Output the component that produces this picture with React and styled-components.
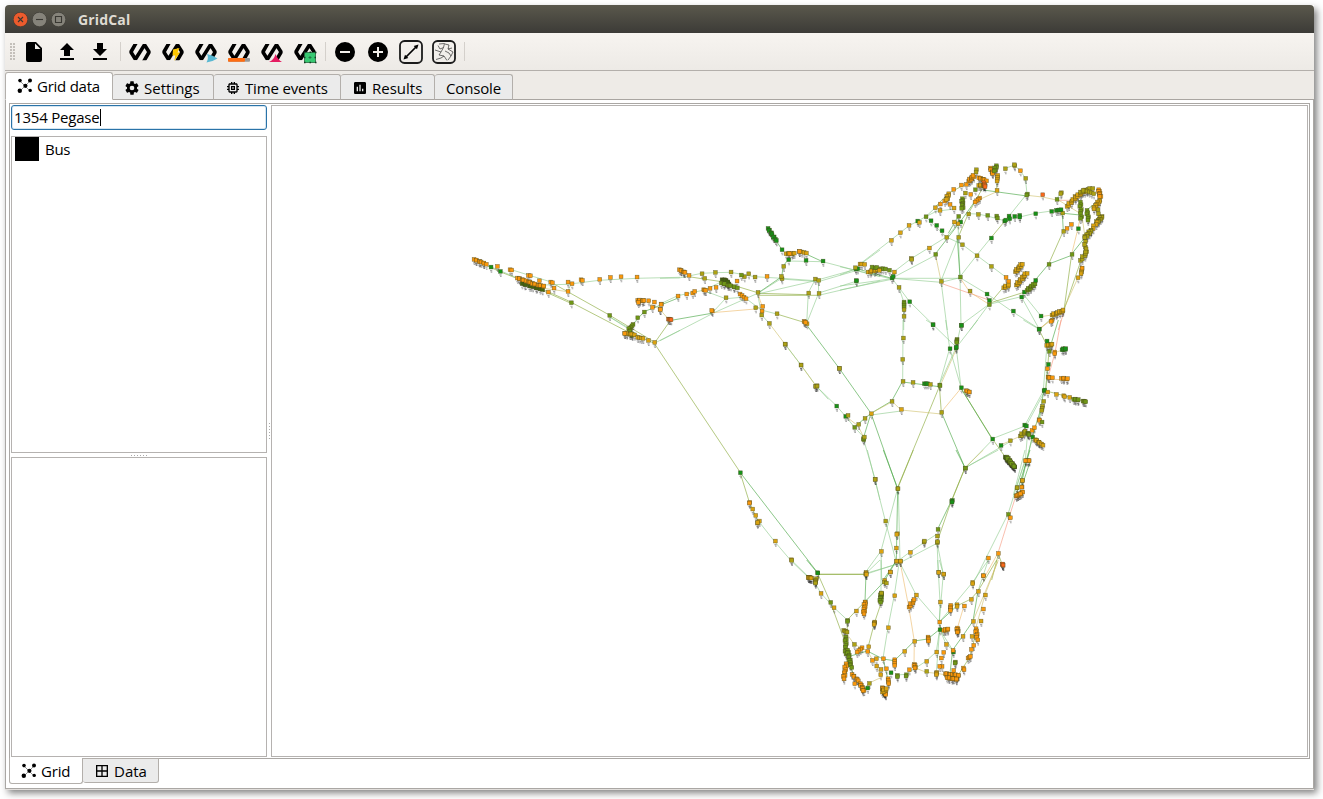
import React from 'react';
import styled, { createGlobalStyle, css } from 'styled-components';

const GlobalStyle = createGlobalStyle`
  *, *::before, *::after { box-sizing: border-box; }
  body { margin: 0; min-height: 100vh; display: flow-root; background: #fff; }
  svg { display: block; flex: none; }
`;

const Window = styled.div`
  width: 1309px;
  height: 784px;
  margin: 5px 0 0 5px;
  display: flex;
  flex-direction: column;
  background: #fff;
  color: #000;
  font: 15px/18px 'Open Sans', 'Noto Sans', sans-serif;
  box-shadow: 0 1px 0 #e2dfdc, 3px 4px 7px 0 rgba(0, 0, 0, 0.5);
`;

const TitleBar = styled.header`
  height: 28px;
  flex: none;
  display: flex;
  align-items: center;
  gap: 4px;
  padding: 1px 8px 0;
  border-radius: 4px 4px 0 0;
  background: linear-gradient(#5a584c, #3c3b37);
`;

const WindowTitle = styled.h1`
  margin: 0 0 0 8px;
  font-size: 14px;
  line-height: 20px;
  font-weight: 700;
  letter-spacing: 0.15px;
  color: #dfdbd2;
`;

const Toolbar = styled.div`
  height: 38px;
  flex: none;
  display: flex;
  align-items: center;
  border-bottom: 1px solid #b3afab;
  background: linear-gradient(#f7f4f0, #edeae6);
`;

const ToolbarGrip = styled.div`
  width: 5px;
  height: 17px;
  margin: 0 3px 0 5px;
  background: radial-gradient(circle at 1px 1px, #c2beb9 0.7px, transparent 0.9px) 0 0 / 3px 3px;
`;

const ToolButton = styled.button`
  width: 33px;
  height: 32px;
  padding: 0 5px 0 4px;
  border: 0;
  background: none;
  color: #000;
`;

const Separator = styled.span`
  width: 1px;
  height: 19px;
  margin: 0 3px;
  background: #d4d0cb;
`;

const TopTabs = styled.nav`
  height: 29px;
  flex: none;
  display: flex;
  align-items: flex-end;
  background: #eeebe7;
  border-bottom: 1px solid #a9a5a1;
`;

const Tab = styled.button`
  width: ${(p) => p.$width}px;
  display: flex;
  align-items: center;
  gap: 4px;
  padding: 0 0 0 11px;
  border: 1px solid #b3afab;
  border-left-width: ${(p) => (p.$active ? 1 : 0)}px;
  background: ${(p) => (p.$active ? '#fff' : '#ebebeb')};
  color: #000;
  font: inherit;
  letter-spacing: ${(p) => p.$tracking || 0}px;
  white-space: nowrap;
  ${(p) =>
    p.$bottom
      ? css`
          height: ${p.$active ? 26 : 25}px;
          border-top: ${p.$active ? 0 : '1px solid #b3afab'};
          border-radius: 0 0 3px 3px;
        `
      : css`
          margin-bottom: -1px;
          height: ${p.$active ? 28 : 26}px;
          padding-top: ${p.$active ? 0 : 1}px;
          border-bottom-color: ${p.$active ? '#fff' : '#a9a5a1'};
          border-radius: 3px 3px 0 0;
        `}
`;

const Page = styled.main`
  flex: 1;
  display: flex;
  flex-direction: column;
  padding: 3px 3px 0 3px;
  border: 1px solid #aaa7a4;
  border-top: 0;
`;

const Workspace = styled.section`
  height: 656px;
  flex: none;
  display: flex;
  padding: 1px;
  border: 1px solid #aaa7a4;
`;

const SidePanel = styled.aside`
  width: 256px;
  display: flex;
  flex-direction: column;
`;

const SearchInput = styled.div`
  height: 25px;
  flex: none;
  display: flex;
  align-items: center;
  padding: 0 2px 1px;
  border: 1px solid #2a73a8;
  border-radius: 3px;
  box-shadow: inset 0 0 0 1px #d5e5f0;
  letter-spacing: -0.2px;
`;

const Caret = styled.i`
  width: 1px;
  height: 17px;
  background: #000;
`;

const Frame = styled.div`
  border: 1px solid #b5b2b0;
`;

const TypeList = styled(Frame)`
  height: 317px;
  margin-top: 6px;
`;

const TypeItem = styled.div`
  display: flex;
  align-items: center;
  gap: 6px;
  padding-left: 3px;
  letter-spacing: -0.3px;
`;

const TypeSwatch = styled.span`
  width: 24px;
  height: 24px;
  background: #000;
`;

const SplitHandle = styled.div`
  flex: none;
  display: flex;
  align-items: center;
  justify-content: center;
  ${(p) => (p.$vertical ? 'width: 4px;' : 'height: 4px;')}
  &::after {
    content: '';
    ${(p) => (p.$vertical ? 'width: 1px; height: 17px;' : 'width: 17px; height: 1px;')}
    background: repeating-linear-gradient(${(p) => (p.$vertical ? '180deg' : '90deg')}, #aaa 0 1px, transparent 1px 3px);
  }
`;

const PropertyPanel = styled(Frame)`
  flex: 1;
`;

const Canvas = styled(Frame)`
  flex: 1;
  overflow: hidden;
`;

const BottomTabs = styled.nav`
  display: flex;
  align-items: flex-start;
  margin-top: -1px;
`;

const Icon = ({ d, size = 24, children }) => (
  <svg width={size} height={size} viewBox="0 0 24 24" fill="currentColor">
    {d && <path d={d} />}
    {children}
  </svg>
);

const Flow = ({ children }) => (
  <Icon>
    <svg x="0" y="4" width="24" height="16.2" viewBox="0 4 24 16.2">
      <path d="M8.6 2L2.9 12L7.4 19.2L16.5 4.8L21.1 12L15.4 22" fill="none" stroke="#000" strokeWidth="3.6" strokeLinejoin="bevel" />
    </svg>
    {children}
  </Icon>
);

const NetworkIcon = () => (
  <svg width="16" height="16" viewBox="0 0 16 16">
    <path d="M3 3L8 8L13 3M8 8L3 13M8 8L13 13" fill="none" stroke="#777" strokeWidth="0.8" />
    <circle cx="3" cy="2.6" r="1.8" />
    <circle cx="13" cy="2.4" r="2" />
    <circle cx="8.4" cy="7.8" r="2.1" />
    <circle cx="2.8" cy="12.8" r="2.2" />
    <circle cx="13.2" cy="12.4" r="1.7" />
  </svg>
);

const PATHS = {
  file: 'M13,9V3.5L18.5,9M6,2C4.89,2 4,2.89 4,4V20A2,2 0 0,0 6,22H18A2,2 0 0,0 20,20V8L14,2H6Z',
  upload: 'M9,16V10H5L12,3L19,10H15V16H9M5,20V18H19V20H5Z',
  download: 'M5,20H19V18H5M19,9H15V3H9V9H5L12,16L19,9Z',
  minus: 'M17,13H7V11H17M12,2A10,10 0 0,0 2,12A10,10 0 0,0 12,22A10,10 0 0,0 22,12A10,10 0 0,0 12,2Z',
  plus: 'M17,13H13V17H11V13H7V11H11V7H13V11H17M12,2A10,10 0 0,0 2,12A10,10 0 0,0 12,22A10,10 0 0,0 22,12A10,10 0 0,0 12,2Z',
  settings:
    'M12,15.5A3.5,3.5 0 0,1 8.5,12A3.5,3.5 0 0,1 12,8.5A3.5,3.5 0 0,1 15.5,12A3.5,3.5 0 0,1 12,15.5M19.43,12.97C19.47,12.65 19.5,12.33 19.5,12C19.5,11.67 19.47,11.34 19.43,11L21.54,9.37C21.73,9.22 21.78,8.95 21.66,8.73L19.66,5.27C19.54,5.05 19.27,4.96 19.05,5.05L16.56,6.05C16.04,5.66 15.5,5.32 14.87,5.07L14.5,2.42C14.46,2.18 14.25,2 14,2H10C9.75,2 9.54,2.18 9.5,2.42L9.13,5.07C8.5,5.32 7.96,5.66 7.44,6.05L4.95,5.05C4.73,4.96 4.46,5.05 4.34,5.27L2.34,8.73C2.21,8.95 2.27,9.22 2.46,9.37L4.57,11C4.53,11.34 4.5,11.67 4.5,12C4.5,12.33 4.53,12.65 4.57,12.97L2.46,14.63C2.27,14.78 2.21,15.05 2.34,15.27L4.34,18.73C4.46,18.95 4.73,19.03 4.95,18.95L7.44,17.94C7.96,18.34 8.5,18.68 9.13,18.93L9.5,21.58C9.54,21.82 9.75,22 10,22H14C14.25,22 14.46,21.82 14.5,21.58L14.87,18.93C15.5,18.67 16.04,18.34 16.56,17.94L19.05,18.95C19.27,19.03 19.54,18.95 19.66,18.73L21.66,15.27C21.78,15.05 21.73,14.78 21.54,14.63L19.43,12.97Z',
  results:
    'M9 17H7V10H9V17M13 17H11V7H13V17M17 17H15V13H17V17M19 3H5C3.9 3 3 3.9 3 5V19C3 20.1 3.9 21 5 21H19C20.1 21 21 20.1 21 19V5C21 3.9 20.1 3 19 3Z',
  chip: 'M15 9H9v6h6V9zm-2 4h-2v-2h2v2zm8-2V9h-2V7c0-1.1-.9-2-2-2h-2V3h-2v2h-2V3H9v2H7c-1.1 0-2 .9-2 2v2H3v2h2v2H3v2h2v2c0 1.1.9 2 2 2h2v2h2v-2h2v2h2v-2h2c1.1 0 2-.9 2-2v-2h2v-2h-2v-2h2zm-4 6H7V7h10v10z',
  table: 'M3 3H21V21H3V3M5 5V11H11V5H5M13 5V11H19V5H13M5 13V19H11V13H5M13 13V19H19V13H13Z',
};

const WindowButton = ({ close, children }) => (
  <svg width="15" height="15" viewBox="0 0 15 15">
    <circle cx="7.5" cy="7.5" r="7.3" fill={close ? '#ec5b2d' : '#85837a'} stroke="#393832" strokeWidth="0.7" />
    <g fill="none" stroke="#393832" strokeWidth="1.1">{children}</g>
  </svg>
);

const NODE_COLORS = {
  o: '#fb980c', d: '#dba310', y: '#aea214', v: '#6f9716', g: '#169218', r: '#fa681b', k: '#41640e',
};

const EDGE_COLORS = {
  L: ['#8cc98a', 0.6], G: ['#4da949', 0.65], V: ['#8dab40', 0.65], Y: ['#cfbf68', 0.6], O: ['#ecb866', 0.6], R: ['#f59c84', 0.65],
};

// Each sector has an origin in scene units; its points are in thirds of a unit.
// Nodes: "x,y" is one bus, "x,y>x,y*n" is a chain of n buses. A letter sets the colour.
const SECTORS = [
  {
    origin: [460, 220],
    nodes: `k 185,190>245,207*10 g 92,140 120,153 o 41,117>77,131*9 111,138 149,148 154,149 204,165 210,166 171,173>215,188*12 237,181 215,190>252,198*8 271,185 276,187 281,203 264,215 323,185 335,190 323,213 362,178 366,180 418,177 450,171 482,169 530,170
      v 333,247 448,285 532,292 552,275 518,312>508,325*4 o 532,240>552,241*6 534,246 565,241 582,245 603,251 576,261 599,267 v 505,325>516,345*5 d 493,339>520,342*7 532,351>548,354*4 564,360 583,366 o 493,339 r 624,296>632,298*4`,
    edges: `V 41,119 120,155 200,187 320,240 493,330 583,370|V 210,195 333,250|V 282,192 448,285 583,366|L 154,149 280,188|L 92,140 170,173|L 252,195 323,193 418,181 530,175 660,172|L 335,190 323,213|Y 252,205 323,215|V 583,370 631,302|L 583,370 660,331|L 448,290 508,325|L 448,290 545,352|G 508,325 552,275 600,256 660,232|Y 552,242 599,267 624,296|V 583,370 840,756`,
  },
  {
    origin: [660, 210],
    nodes: `o 57,178>75,187*6 86,195 53,257 79,251 97,248 103,243 130,238>136,240*3 149,234 167,231 2,282 0,297 156,302 154,300 230,212 239,251>257,265*4 307,288 305,302 320,198
      y 125,190 165,186 212,185 252,199 265,190 284,200 133,204 197,262 293,246 286,292 304,314 327,339 350,310 375,402 422,464 466,528 470,526 537,474 445,248 476,249 465,206 475,210 365,205 370,168 363,198 v 243,194
      k 185,208>205,220*9 193,208>202,215*5 v 183,218>230,232*9 g 323,54>347,90*10 365,118 385,148 437,150 488,152 588,211 587,176 d 377,130>403,129*6 417,123>438,128*4 440,340 o 417,123 388,130 431,333>436,336*3`,
    edges: `L 0,205 57,204 125,190 165,188 212,187 284,200 365,205 465,212 587,178|L 363,207 475,215 587,182|L 594,168 660,120|G 347,90 365,118|L 385,153 488,155 660,200|G 438,132 488,155|G 385,148 370,168 365,200 293,250|V 293,250 445,254|V 293,256 476,256|L 476,256 660,213|L 476,249 588,214|V 86,200 185,215 293,248|L 293,252 475,210|L 465,210 445,248 440,340|L 475,210 476,249 440,340|L 293,250 304,314 327,339|Y 327,339 422,464|L 422,464 468,527 505,568|G 440,345 537,474 633,610|O 156,308 286,297 307,290|O 293,250 307,290|V 350,312 432,337|L 257,265 304,300 350,312|L 0,282 53,257 133,240 185,215|G 133,240 149,250|L 145,247 197,266 245,262|L 197,265 160,305|L 165,307 293,250|L 0,392 155,312|G 22,333 155,310|L 365,205 293,250`,
  },
  {
    origin: [840, 150],
    nodes: `g 52,355 48,391 155,383 158,378 y 45,352 d 59,341 64,341 73,342 83,365>112,358*6 v 95,350>145,358*7 d 117,360 162,365 y 176,411 v 191,455>191,470*4 y 191,478 191,498 g 208,454 278,523 363,525 y 303,393 389,422 v 360,380 286,312 y 213,324 214,327 d 267,293 153,270 180,247 206,225 g 232,212 d 237,216 v 257,199 g 272,211 289,225 305,241 y 319,261 355,261 366,283 410,316 453,348 g 453,263 440,431 447,450 v 447,463 g 519,482 544,440 552,425 v 560,420>583,400*9 g 586,390
      o 497,381 505,393 d 490,412>505,404*5 528,404>558,368*12 525,364>545,341*9 g 602,497 597,536 d 635,494>670,480*11 v 626,342 695,312 g 714,235 d 713,382 725,354>722,370*4 o 725,353 y 720,330>740,305*6 735,290 670,243 o 680,234 693,222 y 667,188 g 634,183 648,180>662,178*4 586,190 538,195 538,200 523,198 506,197 508,205 493,212 496,209 v 469,197 471,203 442,195 y 414,192 385,191 g 361,215 d 353,220 342,215 v 355,198 366,145>366,175*8
      d 341,173 299,180 285,172 o 329,162 300,161 313,152 d 325,130>318,148*5 o 340,117 363,104 378,102 385,92>400,76*8 y 408,58 407,65 v 405,118 o 391,132 y 375,128 o 418,143>404,155*4 415,82>436,90*7 d 415,105>434,105*6 r 430,97>434,109*4 o 450,53>458,70*6 v 468,46>462,62*5 d 472,75>470,92*4 470,120 y 495,55 523,46 522,43 o 540,61 y 556,84 v 561,131 559,134 r 607,133 v 650,147 y 663,127 661,130 d 680,168>706,140*8 706,140>735,120*8 y 720,125>755,113*7 o 775,118>780,140*8 d 778,150>760,175*9 y 740,122>760,130*4 v 720,155>722,205*8 740,180>744,210*6 y 773,178 774,190 785,198>770,215*8 d 770,215>752,240*5 y 752,240>733,262*9 733,262>736,305*5`,
    edges: `L 61,341 153,270 206,228 257,200 299,161|L 257,200 289,184 342,177|L 0,350 155,387|L 0,375 45,357|L 155,385 303,397 360,383|L 155,385 360,385|L 0,408 155,386|L 0,420 155,388|G 45,355 155,385|L 162,365 213,326|L 213,326 267,293 319,261 361,215|L 155,385 286,316|Y 286,312 303,393|G 286,312 361,215 404,155|L 257,200 319,261 366,283 410,316 453,348 497,381|L 360,380 410,316 453,263|V 453,263 493,215|L 360,380 355,261 355,198|L 303,393 355,261|V 355,261 385,191 430,110|L 303,393 322,540|L 360,380 363,525|R 303,400 447,450|O 360,383 389,426 447,463|L 360,383 440,431 519,486 597,536|L 363,525 447,463|V 447,463 490,412|L 447,463 544,440 586,390|V 447,460 552,427|L 447,463 390,540|L 544,440 597,536|L 552,435 602,497|Y 602,500 635,495|G 586,390 626,342 695,316|V 626,342 670,243|G 670,243 667,188|G 695,312 735,262|O 695,312 714,235 720,205|V 695,312 672,480|V 737,290 672,480|Y 713,385 670,480|V 597,540 640,500|L 493,212 586,190 634,183 662,178|L 385,191 414,192 442,198 493,212|L 561,131 496,212|G 561,138 430,120|Y 561,136 607,141 650,150|R 650,151 706,151|L 495,55 523,46 540,61 556,84 561,131|V 472,75 470,120|Y 470,125 404,155|Y 650,147 720,190|G 670,190 720,195|L 650,147 663,127|L 155,385 176,411 191,455 191,540|L 176,411 208,454 278,523|G 355,198 325,250|V 342,215 366,220|V 285,172 325,130 378,102|Y 720,155 735,262|G 740,180 785,145|R 672,485 655,540|G 352,265 360,380`,
  },
  {
    origin: [780, 320],
    nodes: `y 14,71 62,134 106,198 110,197 g 169,257 196,288 y 203,285 235,312 v 223,321 y 254,294 v 250,358 249,355 y 252,350 d 273,280 285,477 y 352,505 335,243 d 363,267 y 368,183 398,186 367,117 369,53 177,144 g 432,190>442,190*3 y 450,192 v 478,194 479,196 y 484,276 v 555,444 g 516,540 458,13 543,15 509,85 527,83 528,80 v 530,57>529,66*4 g 543,202 o 557,211>567,215*5 g 637,356 662,375 y 690,361 k 675,410>703,440*18 v 680,410>700,437*10 g 733,314 738,317 y 720,347>735,333*6 v 742,338>746,343*4 o 755,330 762,322 776,298 778,300 v 785,305 y 786,258>784,270*3 790,243 g 791,211 793,209 d 802,215 828,222 850,226 853,229 868,231 v 880,237>894,238*5 908,242>916,244*4 o 803,170>807,172*3 816,172 843,174>862,175*5 o 801,145 g 804,132 v 807,93 d 799,75>816,72*6 g 800,62 o 823,95 823,100 g 845,88>856,85*5 776,27 o 815,0 812,3 g 757,350 d 765,358>787,374*9 737,421>746,421*4 d 726,481 y 710,502 o 725,500 725,515 708,527>722,520*4`,
    edges: `G 273,280 352,505|V 352,505 478,200|L 14,71 62,134|Y 62,134 108,198|L 108,198 169,257 196,288 223,321 250,350|G 273,280 335,243|Y 273,280 335,246|G 335,243 368,183|Y 335,243 363,270 484,282|L 273,285 363,273|L 368,183 369,0|G 368,186 478,200|V 478,194 484,276|G 484,276 555,444|V 555,444 516,540|O 484,276 543,205|V 543,205 637,356 675,410|G 543,205 637,358|L 637,356 735,318|L 555,444 637,360|L 555,444 690,365|L 478,194 509,85|L 509,85 497,0|L 478,194 527,85 593,0|Y 482,194 530,85|L 527,85 543,15|L 543,202 509,85|L 543,202 529,85|L 438,0 458,13 527,80|G 273,280 250,355|L 250,355 285,477 300,540|G 273,280 223,321|Y 196,288 235,318 250,350|L 791,211 735,315|L 793,216 739,317|G 791,211 778,300|G 785,258 757,350 726,481|L 742,350 736,421 708,505|L 767,320 739,421 718,520|V 797,211 807,93|L 790,211 801,75|L 797,211 803,132|V 776,27 800,75|L 776,27 730,0|O 776,27 815,0|R 843,0 825,98 805,170|G 835,0 807,93|V 791,211 915,244|O 805,177 860,180|Y 823,98 848,90|Y 662,375 735,342|O 762,322 778,300|V 740,340 787,378`,
  },
  {
    origin: [720, 450],
    nodes: `g 60,67 o 88,156 87,158 d 97,176 106,195 117,212 111,218 112,216 165,272 213,328 264,381>274,383*4 y 288,385 g 292,367 d 437,366 436,371 483,303 y 464,87 496,212 533,115 d 531,250 529,252 528,293 528,333 540,333 o 510,365 d 493,390 570,306 y 611,275 612,272 v 653,237 y 651,257 651,277 651,274 655,366 670,372 g 694,153 695,155 v 735,53 y 890,112 v 864,192 o 870,202 834,309 804,323 789,376 r 846,342 848,345 o 915,31 926,31 d 906,90 o 904,110 907,125 888,136>900,130*4`,
    edges: `G 60,67 292,367|V 60,67 88,156 115,215|L 117,215 165,276 213,332 268,385|V 292,373 437,373|L 437,373 528,343|L 437,366 483,303 533,115|L 483,303 485,390|G 533,115 529,333|L 535,115 540,333|L 442,0 464,87 496,212 528,333|G 490,0 533,115|V 580,0 533,115|L 528,337 570,306 611,278 651,252|G 653,237 694,153|V 694,153 735,53|L 540,338 651,280|V 651,277 694,153|L 651,277 655,366|L 651,277 670,372|G 708,0 735,53|Y 735,53 790,0|L 735,53 835,0|R 834,309 888,136|G 888,136 930,0|L 880,136 915,0|L 765,390 864,192 915,31|V 834,309 846,342|O 834,309 789,390|V 836,309 815,390|G 490,390 528,333|G 932,30 905,110`,
  },
  {
    origin: [780, 560],
    nodes: `y 34,0 g 112,38 d 84,51>92,53*4 y 106,60>105,68*4 d 122,99 v 151,126 d 161,142 v 202,180 201,183 y 190,210>200,215*4 v 196,230>196,280*9 d 228,152 y 255,125 o 254,125>250,160*9 d 257,38 258,42 v 303,98>300,125*9 y 303,98 312,65 318,68 d 330,35 349,2 360,2 343,106 324,202 283,185>281,192*4 265,259 y 222,252 o 245,262>230,275*4 262,273 v 202,270>212,320*12 o 197,310>190,355*9 215,342>235,362*6 223,370 240,370>250,392*8 g 262,383 y 267,369 o 276,300 d 288,295 289,317 302,327 301,343 o 309,295 318,325 343,298>343,315*4 g 332,337 o 323,355>325,370*4 k 307,385>313,398*5 o 306,382>315,402*10 d 306,395>318,385*5 v 351,345 351,349 378,343 377,347 d 373,273 403,243 o 387,328 402,312>404,323*5 386,140>402,118*6 d 408,104 o 443,230>444,242*4 d 439,303 y 439,333 d 469,275 469,336>468,343*3 o 478,185 g 479,208 o 485,318 478,318 483,293 490,276 d 480,125 475,36 490,41 o 490,210>503,206*5 531,203>532,216*6 511,135>510,150*4 d 530,133 530,138 o 552,137 d 573,117 577,66 577,70 594,93 615,104 o 609,46 609,146 d 602,182 579,183 o 587,205>590,237*7 d 575,228 548,228 498,252 g 519,275 o 518,270 v 525,305 524,308 o 520,330 549,323 551,328 580,255 573,267 563,293>570,288*3 y 498,343>532,350*8 o 495,340>535,345*13 500,352>530,357*8 r 666,11 668,14`,
    edges: `V 112,43 258,43|G 80,0 112,38|V 112,38 151,126 200,260|L 34,0 86,51|L 106,70 122,99 161,142 202,180|V 202,180 228,152 255,125|G 255,125 258,40|G 255,125 312,65 349,2|L 258,40 300,0|L 258,40 360,10|L 303,98 303,0|V 303,130 283,190 265,259|L 343,106 358,5|L 343,106 324,202 309,295|L 358,5 408,104 478,185|O 360,5 386,140 403,243|O 403,243 402,312|L 478,185 480,125 473,0|L 478,185 490,41 478,0|G 403,243 443,237 479,208|G 403,243 373,273 343,302 309,297 262,273 205,290|L 479,208 518,270|G 518,270 548,228 579,183 594,93|L 594,93 625,0|G 479,185 530,138|L 479,185 577,68 625,0|V 530,138 573,117 594,93|V 594,93 650,0|Y 655,0 615,104 587,205|Y 653,5 579,183|G 518,270 510,340|G 478,185 482,210|Y 262,273 289,317|Y 222,252 192,210|Y 222,252 262,273|G 309,295 323,355|Y 309,350 267,369|L 350,345 378,343 439,303 469,275 479,208|Y 404,323 439,337 469,340 500,345|O 552,137 532,205|L 479,208 469,338|V 590,210 570,290 535,345|G 210,320 235,370 250,392|V 202,180 200,340|Y 289,317 301,343|V 267,369 250,392|L 479,208 498,252 518,270`,
  },
];

const toPoint = (text, [ox, oy]) => {
  const [x, y] = text.split(',').map(Number);
  return [ox + x / 3, oy + y / 3];
};

const readNodes = ({ origin, nodes }) => {
  let color = 'y';
  return nodes.trim().split(/\s+/).flatMap((token) => {
    if (NODE_COLORS[token]) {
      color = token;
      return [];
    }
    const [from, rest] = token.split('>');
    const a = toPoint(from, origin);
    if (!rest) return [{ x: a[0], y: a[1], color }];
    const [to, count] = rest.split('*');
    const b = toPoint(to, origin);
    const n = Number(count);
    return Array.from({ length: n }, (_, i) => {
      const t = i / (n - 1);
      const sway = n > 4 ? Math.sin(i * 2.4) * 0.8 : 0;
      return { x: a[0] + (b[0] - a[0]) * t + sway, y: a[1] + (b[1] - a[1]) * t + sway * 0.6, color };
    });
  });
};

const readEdges = ({ origin, edges }) =>
  edges.split('|').map((line) => {
    const [kind, ...points] = line.trim().split(/\s+/);
    return { kind, points: points.map((p) => toPoint(p, origin).map((v) => v.toFixed(1)).join(',')).join(' ') };
  });

const NODES = SECTORS.flatMap(readNodes);
const EDGES = SECTORS.flatMap(readEdges);

const GridDiagram = () => (
  <svg width="1035" height="650" viewBox="272 106 1035 650">
    {EDGES.map((e, i) => (
      <polyline key={i} points={e.points} fill="none" stroke={EDGE_COLORS[e.kind][0]} strokeWidth={EDGE_COLORS[e.kind][1]} />
    ))}
    {NODES.map((n, i) => (
      <path key={i} d={`M${n.x - 0.6} ${n.y + 3.9}h2.2m-1.6 1.5h1.6`} stroke="#111" strokeWidth="1.2" opacity="0.36" />
    ))}
    {NODES.map((n, i) => (
      <rect key={i} x={n.x - 1.5} y={n.y - 1.5} width="3.8" height="3.8" fill={NODE_COLORS[n.color]} stroke="#45461c" strokeWidth="0.5" strokeOpacity="0.7" />
    ))}
  </svg>
);

export default function App() {
  return (
    <>
      <GlobalStyle />
      <Window>
        <TitleBar>
          <WindowButton close><path d="M5 5L10 10M10 5L5 10" /></WindowButton>
          <WindowButton><path d="M4 7.5H11" /></WindowButton>
          <WindowButton><path d="M4.5 4.5H10.5V10.5H4.5Z" /></WindowButton>
          <WindowTitle>GridCal</WindowTitle>
        </TitleBar>
        <Toolbar>
          <ToolbarGrip />
          <ToolButton><Icon d={PATHS.file} /></ToolButton>
          <ToolButton><Icon d={PATHS.upload} /></ToolButton>
          <ToolButton><Icon d={PATHS.download} /></ToolButton>
          <Separator />
          <ToolButton><Flow /></ToolButton>
          <ToolButton>
            <Flow><path d="M12 9.5L18.5 8L16.5 12.5H19L13.2 21L14.2 15.5H11.5Z" fill="#ffc800" /></Flow>
          </ToolButton>
          <ToolButton>
            <Flow><path d="M13 14Q19 15 23.5 18.5Q18 22 12.5 22.5Q15 18 13 14Z" fill="#5ab8d2" /></Flow>
          </ToolButton>
          <ToolButton>
            <Flow>
              <rect x="1" y="18" width="22" height="3.7" rx="1" fill="#999" />
              <rect x="1" y="18" width="17" height="3.7" rx="1" fill="#ff6d12" />
            </Flow>
          </ToolButton>
          <ToolButton>
            <Flow><path d="M9 22Q14 20 15.5 14Q18 20 22 22Z" fill="#e51c61" /></Flow>
          </ToolButton>
          <ToolButton>
            <Flow>
              <rect x="11.5" y="12.5" width="11" height="10" fill="#37c871" />
              <path d="M11.5 12.5h11v10h-11zM17 16v3M15.5 17.5h3" fill="none" stroke="#23683d" strokeWidth="0.8" />
              <path d="M11 12.5h1.5m4-.3h1.5m4 .3h1.5M11 17.5h1.5m9 0h1.5M11 22.5h1.5m4 0h1.5m4 0h1.5" stroke="#123c22" strokeWidth="1.4" />
            </Flow>
          </ToolButton>
          <Separator />
          <ToolButton><Icon d={PATHS.minus} /></ToolButton>
          <ToolButton><Icon d={PATHS.plus} /></ToolButton>
          <ToolButton>
            <Icon>
              <rect x="1" y="1" width="22" height="22" rx="4.5" fill="none" stroke="#1b1b1b" strokeWidth="1.8" />
              <path d="M7 17L17 7" stroke="#000" strokeWidth="1.7" />
              <path d="M4.5 19.5L6 14.7L9.3 18ZM19.5 4.5L14.7 6L18 9.3Z" />
            </Icon>
          </ToolButton>
          <ToolButton>
            <Icon>
              <rect x="1" y="1" width="22" height="22" rx="4.5" fill="none" stroke="#1b1b1b" strokeWidth="1.8" />
              <path d="M3 10L9 12L7 15L12 16L9 18L4 19.5M6 5.5L8 9L11.5 7.5M7 4L12.5 3.5L11.5 7.5L9 12M13 4L17 5L16 9L20 8M16 9L21 12L19 16L16 20M12 16L15 20.5M13 11L17 13L19 16" fill="none" stroke="#333" strokeWidth="0.7" />
            </Icon>
          </ToolButton>
          <Separator />
        </Toolbar>
        <TopTabs>
          <Tab $active $width={108} $tracking={-0.25}><NetworkIcon />Grid data</Tab>
          <Tab $width={101}><Icon d={PATHS.settings} size={16} />Settings</Tab>
          <Tab $width={127} $tracking={-0.15}><Icon d={PATHS.chip} size={16} />Time events</Tab>
          <Tab $width={94}><Icon d={PATHS.results} size={16} />Results</Tab>
          <Tab $width={78} $tracking={-0.15}>Console</Tab>
        </TopTabs>
        <Page>
          <Workspace>
            <SidePanel>
              <SearchInput>1354 Pegase<Caret /></SearchInput>
              <TypeList>
                <TypeItem><TypeSwatch />Bus</TypeItem>
              </TypeList>
              <SplitHandle />
              <PropertyPanel />
            </SidePanel>
            <SplitHandle $vertical />
            <Canvas><GridDiagram /></Canvas>
          </Workspace>
          <BottomTabs>
            <Tab $bottom $active $width={74} $tracking={-0.2}><NetworkIcon />Grid</Tab>
            <Tab $bottom $width={76}><Icon d={PATHS.table} size={16} />Data</Tab>
          </BottomTabs>
        </Page>
      </Window>
    </>
  );
}
